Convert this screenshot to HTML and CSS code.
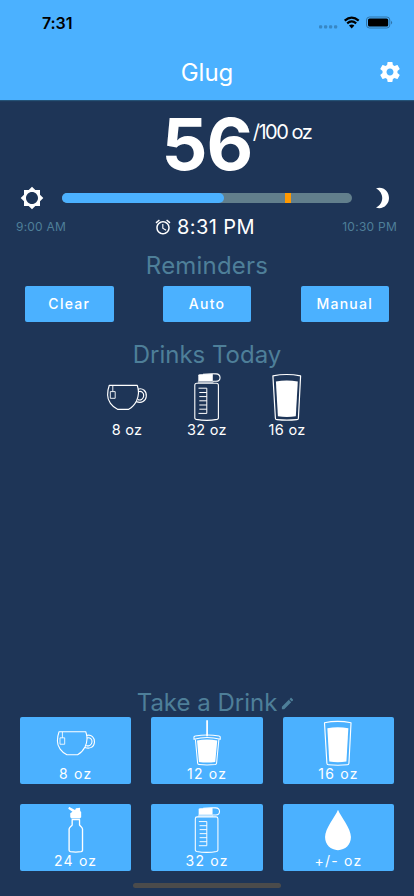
FILE: index.html
```html
<!DOCTYPE html>
<html lang="en">
<head>
<meta charset="utf-8">
<meta name="viewport" content="width=device-width, initial-scale=1">
<title>Glug</title>
<link rel="stylesheet" href="styles.css">
</head>
<body>
<svg class="defs" aria-hidden="true">
  <symbol id="cup" viewBox="0 0 48 48">
    <g fill="none" stroke="#fff" stroke-width="1.15" stroke-linejoin="round">
      <path d="M6.3 12.3H34.2C36 17 35.8 23 33.5 28C31.5 32 29 34.5 25.7 36.3H14.5C9 33.5 4.5 28 4.6 22C4.6 18 5.3 15 6.3 12.3Z"/>
      <path d="M34.8 16.2C40 14.5 43.7 18.5 43.3 23.2C42.8 28.3 38.5 30.6 33.2 28.6"/>
      <path d="M35.4 18.7C38.8 17.7 41 20 40.7 23C40.3 26.3 37.5 27.8 34.7 26.5"/>
      <path stroke-width=".9" d="M9.8 12.3V18.6M7.3 18.6H12.2V25.3H7.3Z"/>
    </g>
  </symbol>
  <symbol id="jug" viewBox="0 0 48 48">
    <path fill="#fff" d="M15.3 2.2Q15.3 1.4 17 1.3L29.8 1V8H15.3Z"/>
    <path fill="#fff" fill-opacity=".6" d="M14.8 8H30.4V10H14.8Z"/>
    <g fill="none" stroke="#fff" stroke-width="1.1">
      <path d="M20 1.3Q26 .6 33 .9C38.4 1.2 38.4 8.2 33 8.3H29.8"/>
      <path d="M13.8 10.3H33.4Q35.4 10.3 35.4 12.3V45.2Q35.4 46 34 46.4Q24 48.3 13.2 46.4Q11.8 46 11.8 45.2V12.3Q11.8 10.3 13.8 10.3Z"/>
      <path stroke-width="1" d="M15.5 15.2H23.8V40.4H15.5M16.3 19.5H23.8M16.3 23.6H23.8M16.3 27.8H23.8M16.3 32H23.8M16.3 36.2H23.8"/>
    </g>
  </symbol>
  <symbol id="glass" viewBox="0 0 48 48">
    <path fill="none" stroke="#fff" stroke-width="1.2" stroke-linejoin="round" d="M9.9 2.9Q23.5 .1 37.6 2.9L35.4 45.2Q35.3 46.6 33.8 46.7Q24 47.7 14 46.7Q12.5 46.6 12.4 45.2Z"/>
    <path fill="#fff" d="M12.9 8.5Q23.7 6.5 34.8 8.5L32.8 43.3Q24 44.7 14.9 43.3Z"/>
  </symbol>
  <symbol id="tumbler" viewBox="0 0 48 48">
    <path fill="#fff" d="M23.2.2H25V17H23.2ZM13.6 21.5Q24 19.2 34.7 21.5L32.6 43.7Q24 45.2 15.6 43.7Z"/>
    <g fill="none" stroke="#fff" stroke-width="1.1" stroke-linejoin="round">
      <path d="M10.4 18.3Q10.2 17 11.7 16.8Q24 14.4 36.6 16.8Q38 17 37.8 18.3V20.2Q24 16.5 10.4 20.2Z"/>
      <path d="M11.9 20.3L14.2 45Q14.3 46.3 15.7 46.5Q24 47.5 32.5 46.5Q33.8 46.3 34 45L36.4 20.3"/>
    </g>
  </symbol>
  <symbol id="sport" viewBox="0 0 48 48">
    <path fill="#fff" d="M16.8 -.2L23 3.2L24 1.2L28.2 .8L28.4 4.3L29.4 5.3V10.8L28 12H19.4L18 10.8V6.6L20.3 4.9L15.9 1.8Z"/>
    <path fill="none" stroke="#fff" stroke-width="1.4" stroke-linejoin="round" d="M20 13.1H27.7V18.7C28.3 19.9 30.6 21 30.8 23V45.2Q30.7 46.3 29.3 46.6Q23.7 47.6 18.2 46.6Q16.8 46.3 16.8 45.2V23C17 21 19.5 19.9 20 18.7Z"/>
  </symbol>
  <symbol id="drop" viewBox="0 0 48 48">
    <path fill="#fff" d="M24 2.8C27 10.4 37.5 21.9 37.5 31.4C37.5 39.4 31.6 45 24 45S10.5 39.4 10.5 31.4C10.5 21.9 21 10.4 24 2.8Z"/>
  </symbol>
</svg>

<header>
  <div class="status">
    <span class="clock">7:31</span>
    <svg class="signals" width="76" height="16" viewBox="0 0 76 16">
      <g fill="#3787c5"><rect x="1" y="10.3" width="3.2" height="3.2" rx="1"/><rect x="6" y="10.3" width="3.2" height="3.2" rx="1"/><rect x="11" y="10.3" width="3.2" height="3.2" rx="1"/><rect x="16" y="10.3" width="3.2" height="3.2" rx="1"/></g>
      <g fill="none" stroke="#000" stroke-width="2.2"><path d="M26.7 5.6Q33.7-.4 40.7 5.6"/><path d="M29.2 8.4Q33.7 4.5 38.2 8.4"/></g>
      <path d="M31 10.6Q33.7 8.3 36.4 10.6L33.7 13.4Z"/>
      <rect x="48.5" y="2" width="23.3" height="11" rx="3" fill="none" stroke="#2f74aa"/>
      <rect x="50" y="3.5" width="20.2" height="8" rx="1.6"/>
      <path fill="#2f74aa" d="M73 5.7Q75.4 7.5 73 9.4Z"/>
    </svg>
  </div>
  <div class="bar">
    <h1>Glug</h1>
    <svg class="gear" width="24" height="24" viewBox="0 0 24 24"><path fill="#fff" d="M19.43 12.98c.04-.32.07-.64.07-.98s-.03-.66-.07-.98l2.11-1.65c.19-.15.24-.42.12-.64l-2-3.46c-.12-.22-.39-.3-.61-.22l-2.49 1c-.52-.4-1.08-.73-1.69-.98l-.38-2.65C14.46 2.18 14.25 2 14 2h-4c-.25 0-.46.18-.49.42l-.38 2.65c-.61.25-1.17.59-1.69.98l-2.49-1c-.23-.09-.49 0-.61.22l-2 3.46c-.13.22-.07.49.12.64l2.11 1.65c-.04.32-.07.65-.07.98s.03.66.07.98l-2.11 1.65c-.19.15-.24.42-.12.64l2 3.46c.12.22.39.3.61.22l2.49-1c.52.4 1.08.73 1.69.98l.38 2.65c.03.24.24.42.49.42h4c.25 0 .46-.18.49-.42l.38-2.65c.61-.25 1.17-.59 1.69-.98l2.49 1c.23.09.49 0 .61-.22l2-3.46c.12-.22.07-.49-.12-.64l-2.11-1.65zM12 15.5c-1.93 0-3.5-1.57-3.5-3.5s1.57-3.5 3.5-3.5 3.5 1.57 3.5 3.5-1.57 3.5-3.5 3.5z"/></svg>
  </div>
</header>

<main>
  <div class="total"><strong>56</strong><span>/100 oz</span></div>
  <div class="progress">
    <svg width="24" height="24" viewBox="0 0 24 24"><path fill="#fff" d="M20 15.31L23.31 12 20 8.69V4h-4.69L12 .69 8.69 4H4v4.69L.69 12 4 15.31V20h4.69L12 23.31 15.31 20H20v-4.69zM12 18c-3.31 0-6-2.69-6-6s2.69-6 6-6 6 2.69 6 6-2.69 6-6 6z"/></svg>
    <div class="track"><div class="fill"></div><div class="mark"></div></div>
    <svg width="24" height="24" viewBox="0 0 24 24"><path fill="#fff" d="M6 2.5C13-.1 19 5.5 19 12S13 24 6 21.6C14.3 17.5 14.3 6.5 6 2.5Z"/></svg>
  </div>
  <div class="times">
    <span class="wake">9:00 AM</span>
    <div class="next">
      <svg width="18" height="18" viewBox="0 0 24 24"><path fill="#fff" d="M22 5.72l-4.6-3.86-1.29 1.53 4.6 3.86L22 5.72zM7.88 3.39L6.6 1.86 2 5.71l1.29 1.53 4.59-3.85zM12.5 8H11v6l4.75 2.85.75-1.23-4-2.37V8zM12 4c-4.97 0-9 4.03-9 9s4.02 9 9 9c4.97 0 9-4.03 9-9s-4.03-9-9-9zm0 16c-3.87 0-7-3.13-7-7s3.13-7 7-7 7 3.13 7 7-3.13 7-7 7z"/></svg>
      <span>8:31 PM</span>
    </div>
    <span class="sleep">10:30 PM</span>
  </div>

  <h2 class="h-rem">Reminders</h2>
  <div class="buttons">
    <button>Clear</button><button>Auto</button><button>Manual</button>
  </div>

  <h2 class="h-today">Drinks Today</h2>
  <div class="today">
    <div class="drink"><svg><use href="#cup"/></svg><span>8 oz</span></div>
    <div class="drink"><svg><use href="#jug"/></svg><span>32 oz</span></div>
    <div class="drink"><svg><use href="#glass"/></svg><span>16 oz</span></div>
  </div>

  <section class="take">
    <div class="take-head">
      <h2 class="h-take">Take a Drink</h2>
      <svg width="15" height="15" viewBox="0 0 24 24"><path fill="#4e7f99" d="M3 17.25V21h3.75L17.81 9.94l-3.75-3.75L3 17.25zM20.71 7.04c.39-.39.39-1.02 0-1.41l-2.34-2.34c-.39-.39-1.02-.39-1.41 0l-1.83 1.83 3.75 3.75 1.83-1.83z"/></svg>
    </div>
    <div class="grid">
      <div class="card"><svg><use href="#cup"/></svg><span>8 oz</span></div>
      <div class="card"><svg><use href="#tumbler"/></svg><span>12 oz</span></div>
      <div class="card"><svg><use href="#glass"/></svg><span>16 oz</span></div>
      <div class="card"><svg><use href="#sport"/></svg><span>24 oz</span></div>
      <div class="card"><svg><use href="#jug"/></svg><span>32 oz</span></div>
      <div class="card"><svg><use href="#drop"/></svg><span>+/- oz</span></div>
    </div>
  </section>
  <div class="home"></div>
</main>
</body>
</html>
```

FILE: styles.css
```css
* { box-sizing: border-box; }
body {
  margin: 0;
  width: 414px;
  height: 896px;
  overflow: hidden;
  display: flex;
  flex-direction: column;
  background: #1e3557;
  color: #fff;
  font-family: Inter, "Liberation Sans", sans-serif;
}
svg { display: block; flex: none; }
.defs { position: absolute; width: 0; height: 0; }
h1, h2 { margin: 0; font-weight: 400; white-space: nowrap; }

header {
  height: 100px;
  flex: none;
  background: #4bb1ff;
  box-shadow: 0 1px 1px #245277;
}
.status {
  height: 44px;
  padding: 13px 20px 0 42px;
  display: flex;
  justify-content: space-between;
  color: #000;
}
.clock { font-size: 16px; line-height: 20px; font-weight: 600; letter-spacing: -.1px; }
.signals { margin: 2px 0 0; }
.bar {
  height: 56px;
  padding: 0 12px;
  display: grid;
  grid-template-columns: 24px 1fr 24px;
  align-items: center;
}
h1 { grid-column: 2; padding-top: 2px; text-align: center; font-size: 24px; line-height: 30px; }

main { flex: 1; display: flex; flex-direction: column; }
.total {
  height: 84px;
  padding: 8px 0 0 161.5px;
  display: flex;
  align-items: flex-start;
  white-space: nowrap;
}
.total strong { font-size: 72px; line-height: 72px; font-weight: 700; letter-spacing: -1px; }
.total span { margin: 11px 0 0 .5px; font-size: 20px; line-height: 26px; letter-spacing: -1.5px; }
.progress {
  height: 28px;
  padding: 0 20px;
  display: flex;
  align-items: center;
  justify-content: space-between;
}
.track {
  width: 290px;
  height: 10px;
  border-radius: 5px;
  background: #627f8c;
  display: flex;
}
.fill { width: 162px; border-radius: 5px; background: #4bb1ff; }
.mark { width: 6px; margin-left: 61px; background: #ff9800; }
.times {
  height: 30px;
  padding: 0 17px 1px 16px;
  display: grid;
  grid-template-columns: 1fr auto 1fr;
  align-items: center;
  font-size: 12px;
  color: #4e7f99;
  white-space: nowrap;
}
.wake { letter-spacing: .2px; }
.sleep { text-align: right; letter-spacing: .25px; }
.next { display: flex; align-items: center; gap: 5px; padding-right: 4px; color: #fff; font-size: 20px; letter-spacing: .4px; }

h2 { text-align: center; font-size: 24px; line-height: 30px; color: #4e7f99; }
.h-rem { margin-top: 9px; letter-spacing: .2px; }
.buttons { margin-top: 5px; padding: 0 25px; display: flex; justify-content: space-between; }
button {
  width: 88.5px;
  height: 36px;
  padding: 0;
  border: 0;
  border-radius: 2px;
  background: #4bb1ff;
  color: #fff;
  font: 500 14px/36px Inter, "Liberation Sans", sans-serif;
  letter-spacing: 1.25px;
}
.h-today { margin-top: 18px; }
.today { margin-top: 3px; display: flex; justify-content: center; gap: 32px; }
.drink { width: 48px; display: flex; flex-direction: column; align-items: center; }
.drink svg { width: 48px; height: 48px; }
.drink span { font-size: 14.5px; line-height: 18px; letter-spacing: .3px; white-space: nowrap; }

.take { margin-top: auto; }
.take-head { padding: 1px 0 0 18px; height: 29px; display: flex; justify-content: center; align-items: center; gap: 3px; }
.grid {
  padding: 0 20px;
  display: grid;
  grid-template-columns: repeat(3, 111.4px);
  justify-content: space-between;
  gap: 20px;
}
.card {
  height: 67px;
  padding-top: 3px;
  border-radius: 2px;
  background: #4bb1ff;
  display: flex;
  flex-direction: column;
  align-items: center;
}
.card svg { width: 46px; height: 46px; }
.card span { font-size: 14px; line-height: 16px; letter-spacing: 1.2px; white-space: nowrap; }
.home { width: 148px; height: 5px; margin: 11.6px auto 8px; border-radius: 3px; background: #4b4b4b; }
```
